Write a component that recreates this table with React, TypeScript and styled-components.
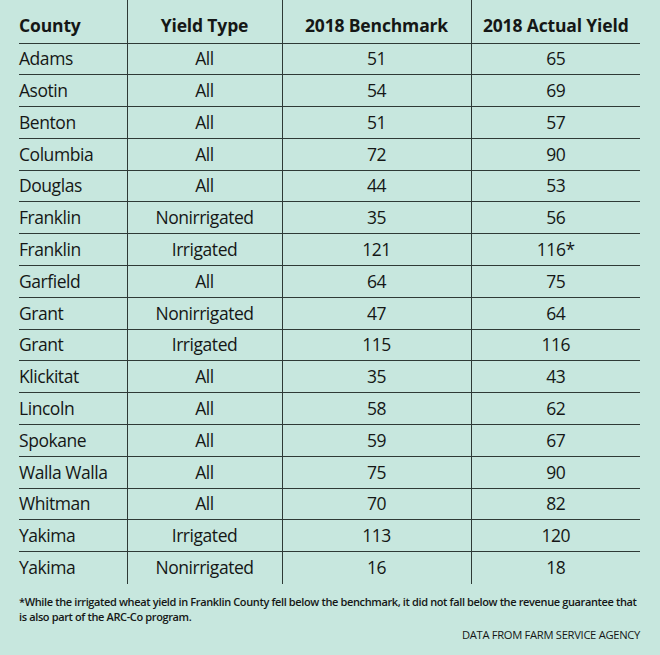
import React from "react"
import styled, { createGlobalStyle } from "styled-components"

const GlobalStyle = createGlobalStyle`
  html, body {
    margin: 0;
    padding: 0;
    background: #c7e7de;
  }
  body {
    font-family: "Open Sans", "Noto Sans", sans-serif;
    color: #151716;
  }
`

const Page = styled.div`
  width: 660px;
  height: 655px;
  box-sizing: border-box;
  padding: 0 20px 0 19px;
  background: #c7e7de;
`

const Table = styled.table`
  width: 621px;
  border-collapse: collapse;
  table-layout: fixed;
`

const HeadCell = styled.th<{ $align?: string; $w: number }>`
  width: ${(p) => p.$w}px;
  height: 43px;
  padding: 0 0 6px;
  box-sizing: border-box;
  vertical-align: bottom;
  text-align: ${(p) => p.$align || "center"};
  font-weight: 700;
  font-size: 17.5px;
  letter-spacing: -0.15px;
  border-bottom: 1.5px solid #2e3a36;
  & + & {
    border-left: 1.5px solid #2e3a36;
  }
`

const Row = styled.tr`
  height: 31.8px;
  & + & td {
    border-top: 1.5px solid #2e3a36;
  }
`

const Cell = styled.td<{ $align?: string }>`
  padding: 0;
  text-align: ${(p) => p.$align || "center"};
  font-size: 17.5px;
  letter-spacing: -0.45px;
  line-height: 1;
  & + & {
    border-left: 1.5px solid #2e3a36;
  }
`

const Note = styled.p`
  margin: 10px 0 0;
  font-size: 11px;
  font-weight: 600;
  line-height: 15px;
  letter-spacing: -0.37px;
`

const Source = styled.div`
  margin-top: 3px;
  text-align: right;
  font-size: 11.2px;
  letter-spacing: -0.3px;
`

const rows: [string, string, string, string][] = [
  ["Adams", "All", "51", "65"],
  ["Asotin", "All", "54", "69"],
  ["Benton", "All", "51", "57"],
  ["Columbia", "All", "72", "90"],
  ["Douglas", "All", "44", "53"],
  ["Franklin", "Nonirrigated", "35", "56"],
  ["Franklin", "Irrigated", "121", "116*"],
  ["Garfield", "All", "64", "75"],
  ["Grant", "Nonirrigated", "47", "64"],
  ["Grant", "Irrigated", "115", "116"],
  ["Klickitat", "All", "35", "43"],
  ["Lincoln", "All", "58", "62"],
  ["Spokane", "All", "59", "67"],
  ["Walla Walla", "All", "75", "90"],
  ["Whitman", "All", "70", "82"],
  ["Yakima", "Irrigated", "113", "120"],
  ["Yakima", "Nonirrigated", "16", "18"],
]

export default function App() {
  return (
    <Page>
      <GlobalStyle />
      <Table>
        <thead>
          <tr>
            <HeadCell $align="left" $w={108}>County</HeadCell>
            <HeadCell $w={155}>Yield Type</HeadCell>
            <HeadCell $w={189}>2018 Benchmark</HeadCell>
            <HeadCell $w={169}>2018 Actual Yield</HeadCell>
          </tr>
        </thead>
        <tbody>
          {rows.map((r, i) => (
            <Row key={i}>
              <Cell $align="left">{r[0]}</Cell>
              <Cell>{r[1]}</Cell>
              <Cell>{r[2]}</Cell>
              <Cell>{r[3]}</Cell>
            </Row>
          ))}
        </tbody>
      </Table>
      <Note>
        *While the irrigated wheat yield in Franklin County fell below the benchmark, it did not fall below the revenue guarantee that
        is also part of the ARC-Co program.
      </Note>
      <Source>DATA FROM FARM SERVICE AGENCY</Source>
    </Page>
  )
}
